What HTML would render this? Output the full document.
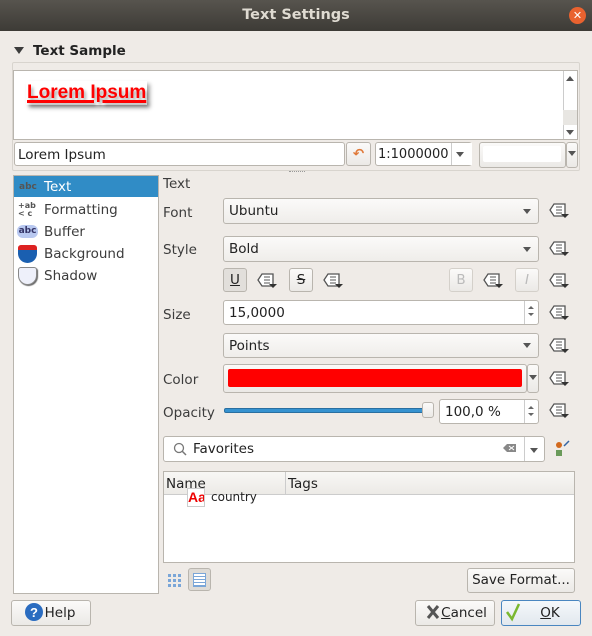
<!DOCTYPE html>
<html><head><meta charset="utf-8"><style>
*{box-sizing:border-box;margin:0;padding:0}
body{width:592px;height:636px;background:#efebe7;font-family:"DejaVu Sans","Liberation Sans",sans-serif;font-size:13.5px;color:#3c3c3c;position:relative;overflow:hidden}
.a{position:absolute}
.tb{left:0;top:0;width:592px;height:31px;background:linear-gradient(#57544e,#3d3b36);color:#dfdbd2;font-weight:bold;font-size:14.5px;text-align:center;line-height:31px}
.cl{left:569px;top:7px;width:17px;height:17px;border-radius:50%;background:#e9622f;color:#fff;font-size:11px;line-height:17px;text-align:center;font-weight:bold}
.w{background:#fff;border:1px solid #b9b5ae}
.cb{background:linear-gradient(#fbfaf9,#efedea);border:1px solid #b9b5ae;border-radius:3px;padding-left:5px;line-height:24px}
.ar{width:0;height:0;border-left:4px solid transparent;border-right:4px solid transparent;border-top:5px solid #555}
.btn{background:linear-gradient(#fbfaf9,#ebe9e6);border:1px solid #b9b5ae;border-radius:3px;text-align:center}
</style></head><body>
<div class="a tb">Text Settings</div>
<div class="a cl">✕</div>
<div class="a" style="left:14px;top:47px;border-left:5px solid transparent;border-right:5px solid transparent;border-top:7px solid #3c3c3c"></div>
<div class="a" style="left:33px;top:43px;font-weight:bold;color:#222">Text Sample</div>
<div class="a" style="left:12px;top:62px;width:568px;height:109px;border:1px solid #d8d4ce;border-radius:2px"></div>
<div class="a w" style="left:13px;top:70px;width:565px;height:70px"></div>
<div class="a" style="left:563px;top:71px;width:14px;height:68px;border-left:1px solid #ccc;background:#fff"></div>
<div class="a" style="left:563px;top:110px;width:14px;height:15px;background:#e8e6e2"></div>
<div class="a" style="left:566px;top:76px;border-left:4px solid transparent;border-right:4px solid transparent;border-bottom:5px solid #555"></div>
<div class="a" style="left:566px;top:130px;border-left:4px solid transparent;border-right:4px solid transparent;border-top:5px solid #555"></div>
<div class="a" style="left:26px;top:81px;font-family:'Liberation Sans',sans-serif;font-weight:bold;font-size:19px;color:#f00;text-decoration:underline;text-decoration-thickness:3px;background:#fff;text-shadow:2px 3px 3px rgba(0,0,0,.35);box-shadow:3px 3px 4px rgba(0,0,0,.35);line-height:24px;padding:0 1px">Lorem Ipsum</div>
<div class="a w" style="left:14px;top:142px;width:331px;height:24px;border-radius:3px;padding-left:3px;line-height:24px;color:#222">Lorem Ipsum</div>
<div class="a btn" style="left:346px;top:142px;width:25px;height:24px;color:#e07a3a;font-weight:bold;line-height:22px">↶</div>
<div class="a w" style="left:375px;top:142px;width:97px;height:24px;border-radius:3px;padding-left:2px;line-height:24px;color:#222;font-size:13px">1:1000000</div>
<div class="a" style="left:451px;top:143px;width:21px;height:22px;background:#fff;border-left:1px solid #ccc"></div>
<div class="a ar" style="left:456px;top:152px"></div>
<div class="a btn" style="left:479px;top:142px;width:87px;height:26px"></div>
<div class="a" style="left:483px;top:146px;width:78px;height:16px;background:#fff;border-radius:2px"></div>
<div class="a btn" style="left:566px;top:142px;width:12px;height:26px"></div>
<div class="a ar" style="left:568px;top:151px"></div>
<div class="a" style="left:289px;top:171px;width:16px;height:2px;border-top:1px dotted #999"></div>

<div class="a w" style="left:13px;top:175px;width:146px;height:419px"></div>
<div class="a" style="left:14px;top:176px;width:144px;height:21px;background:#308cc6"></div>
<div class="a" style="left:19px;top:182px;font-size:9px;color:#555;font-weight:bold">abc</div>
<div class="a" style="left:44px;top:179px;color:#fff">Text</div>
<div class="a" style="left:18px;top:202px;font-size:8px;line-height:8px;color:#555;font-weight:bold">+ab<br>&lt; c</div>
<div class="a" style="left:44px;top:202px">Formatting</div>
<div class="a" style="left:17px;top:225px;width:21px;height:13px;background:#b8c8f0;border-radius:6px;font-size:9px;color:#336;text-align:center;line-height:13px;font-weight:bold">abc</div>
<div class="a" style="left:44px;top:224px">Buffer</div>
<div class="a" style="left:18px;top:245px;width:19px;height:18px;background:#1a5fb0;border-radius:3px 3px 10px 10px;border-top:5px solid #d22"></div>
<div class="a" style="left:44px;top:246px">Background</div>
<div class="a" style="left:18px;top:267px;width:19px;height:18px;background:#eef0fa;border:1px solid #888;border-radius:3px 3px 10px 10px;box-shadow:1px 1px 1px #666"></div>
<div class="a" style="left:44px;top:268px">Shadow</div>

<div class="a" style="left:163px;top:176px">Text</div>
<div class="a" style="left:163px;top:205px">Font</div>
<div class="a" style="left:163px;top:242px">Style</div>
<div class="a" style="left:163px;top:307px">Size</div>
<div class="a" style="left:163px;top:372px">Color</div>
<div class="a" style="left:163px;top:405px">Opacity</div>

<div class="a cb" style="left:223px;top:198px;width:316px;height:26px;color:#222">Ubuntu</div>
<div class="a ar" style="left:523px;top:209px"></div>
<div class="a cb" style="left:223px;top:236px;width:316px;height:26px;color:#222">Bold</div>
<div class="a ar" style="left:523px;top:247px"></div>
<div class="a btn" style="left:223px;top:268px;width:24px;height:24px;background:#e2dfdb;text-decoration:underline;line-height:22px;color:#222">U</div>
<div class="a btn" style="left:289px;top:268px;width:24px;height:24px;text-decoration:line-through;line-height:22px;color:#222">S</div>
<div class="a btn" style="left:449px;top:268px;width:24px;height:24px;color:#bbb;border-color:#d4d0ca;line-height:22px">B</div>
<div class="a btn" style="left:515px;top:268px;width:24px;height:24px;color:#bbb;border-color:#d4d0ca;line-height:22px;font-style:italic">I</div>
<div class="a w" style="left:223px;top:300px;width:316px;height:25px;border-radius:3px;padding-left:5px;line-height:24px;color:#222">15,0000</div>
<div class="a" style="left:524px;top:301px;width:1px;height:23px;background:#ccc"></div>
<div class="a cb" style="left:223px;top:333px;width:316px;height:25px;color:#222">Points</div>
<div class="a ar" style="left:523px;top:343px"></div>
<div class="a btn" style="left:223px;top:364px;width:304px;height:29px"></div>
<div class="a" style="left:228px;top:369px;width:294px;height:18px;background:#f00;border-radius:2px"></div>
<div class="a btn" style="left:527px;top:364px;width:12px;height:29px"></div>
<div class="a ar" style="left:529px;top:375px"></div>
<div class="a" style="left:224px;top:408px;width:202px;height:5px;background:#3592d0;border:1px solid #2a6fa0;border-radius:2px"></div>
<div class="a btn" style="left:422px;top:402px;width:12px;height:16px"></div>
<div class="a w" style="left:439px;top:399px;width:100px;height:25px;border-radius:3px;padding-left:5px;line-height:24px;color:#222">100,0 %</div>
<div class="a" style="left:524px;top:400px;width:1px;height:23px;background:#ccc"></div>

<div class="a w" style="left:163px;top:436px;width:382px;height:26px;border-radius:3px;padding-left:29px;line-height:25px;color:#222">Favorites</div>
<div class="a" style="left:524px;top:437px;width:1px;height:24px;background:#ccc"></div>
<div class="a ar" style="left:530px;top:448px"></div>
<div class="a w" style="left:163px;top:471px;width:412px;height:92px"></div>
<div class="a" style="left:164px;top:472px;width:410px;height:23px;background:linear-gradient(#f8f7f5,#eceae6);border-bottom:1px solid #ccc"></div>
<div class="a" style="left:285px;top:472px;width:1px;height:23px;background:#ccc"></div>
<div class="a" style="left:166px;top:475px;color:#222;line-height:18px">Name</div>
<div class="a" style="left:288px;top:475px;color:#222;line-height:18px">Tags</div>
<div class="a" style="left:187px;top:488px;width:18px;height:19px;border:1px solid #ccc;background:#fff;color:#e00;font-weight:bold;font-size:14px;line-height:17px;overflow:hidden;font-family:'Liberation Sans',sans-serif">Aa</div>
<div class="a" style="left:211px;top:490px;font-size:12px;color:#222">country</div>
<div class="a btn" style="left:188px;top:568px;width:23px;height:23px;background:#dedbd6"></div>
<div class="a" style="left:193px;top:573px;width:13px;height:14px;border:1px solid #7aa6d8;background:repeating-linear-gradient(#fff 0 2px,#7aa6d8 2px 3px)"></div>
<div class="a btn" style="left:467px;top:568px;width:108px;height:25px;line-height:23px;color:#222">Save Format...</div>
<div class="a btn" style="left:11px;top:600px;width:80px;height:26px;line-height:24px;color:#222;padding-left:18px">Help</div>
<div class="a btn" style="left:415px;top:600px;width:80px;height:26px;line-height:24px;color:#222;padding-left:18px"><u>C</u>ancel</div>
<div class="a btn" style="left:501px;top:600px;width:80px;height:26px;line-height:24px;color:#222;padding-left:18px;border-color:#4a86c0;background:linear-gradient(#f5f8fb,#e2e8ee)"><u>O</u>K</div>

<svg class="a" style="left:0;top:0" width="592" height="636">
<defs><g id="dd"><path d="M5 1H16V13H5L1 7Z" fill="#fff" stroke="#555" stroke-width="1.3"/><path d="M7 4H13M7 7H13M7 10H13" stroke="#555"/><path d="M12 11H20L16 15Z" fill="#333"/></g>
<g id="sp"><path d="M-3 4L0 1 3 4Z M-3 8L0 11 3 8Z" fill="#666"/></g></defs>
<use href="#dd" x="549" y="203"/><use href="#dd" x="549" y="241"/>
<use href="#dd" x="257" y="273"/><use href="#dd" x="323" y="273"/><use href="#dd" x="483" y="273"/><use href="#dd" x="549" y="273"/>
<use href="#dd" x="549" y="305"/><use href="#dd" x="549" y="338"/><use href="#dd" x="549" y="371"/><use href="#dd" x="549" y="403"/>
<use href="#sp" x="531" y="305"/><use href="#sp" x="531" y="405"/>
<circle cx="179" cy="448" r="4.5" fill="none" stroke="#777" stroke-width="1.3"/><path d="M182 451L186 455" stroke="#777" stroke-width="1.5"/>
<path d="M503 448L507 444H516V452H507Z" fill="#888"/><path d="M509 446L514 450M514 446L509 450" stroke="#fff"/>
<circle cx="559" cy="445" r="3" fill="#d2691e"/><rect x="556" y="450" width="6" height="6" fill="#6a9a5a"/><path d="M564 446L569 441" stroke="#3465a4" stroke-width="1.5"/>
<g fill="#7aa6d8"><rect x="168" y="574" width="3" height="3"/><rect x="173" y="574" width="3" height="3"/><rect x="178" y="574" width="3" height="3"/><rect x="168" y="579" width="3" height="3"/><rect x="173" y="579" width="3" height="3"/><rect x="178" y="579" width="3" height="3"/><rect x="168" y="584" width="3" height="3"/><rect x="173" y="584" width="3" height="3"/><rect x="178" y="584" width="3" height="3"/></g>
<circle cx="34" cy="612" r="9" fill="#2a6cc0"/>
<text x="34" y="617" fill="#fff" font-size="13" font-weight="bold" text-anchor="middle" font-family="Liberation Sans">?</text>
<path d="M428 606L438 618M438 606L428 618" stroke="#555" stroke-width="3"/>
<path d="M507 612L512 619L519 604" stroke="#7ab830" stroke-width="2.5" fill="none"/>
</svg>
</body></html>
